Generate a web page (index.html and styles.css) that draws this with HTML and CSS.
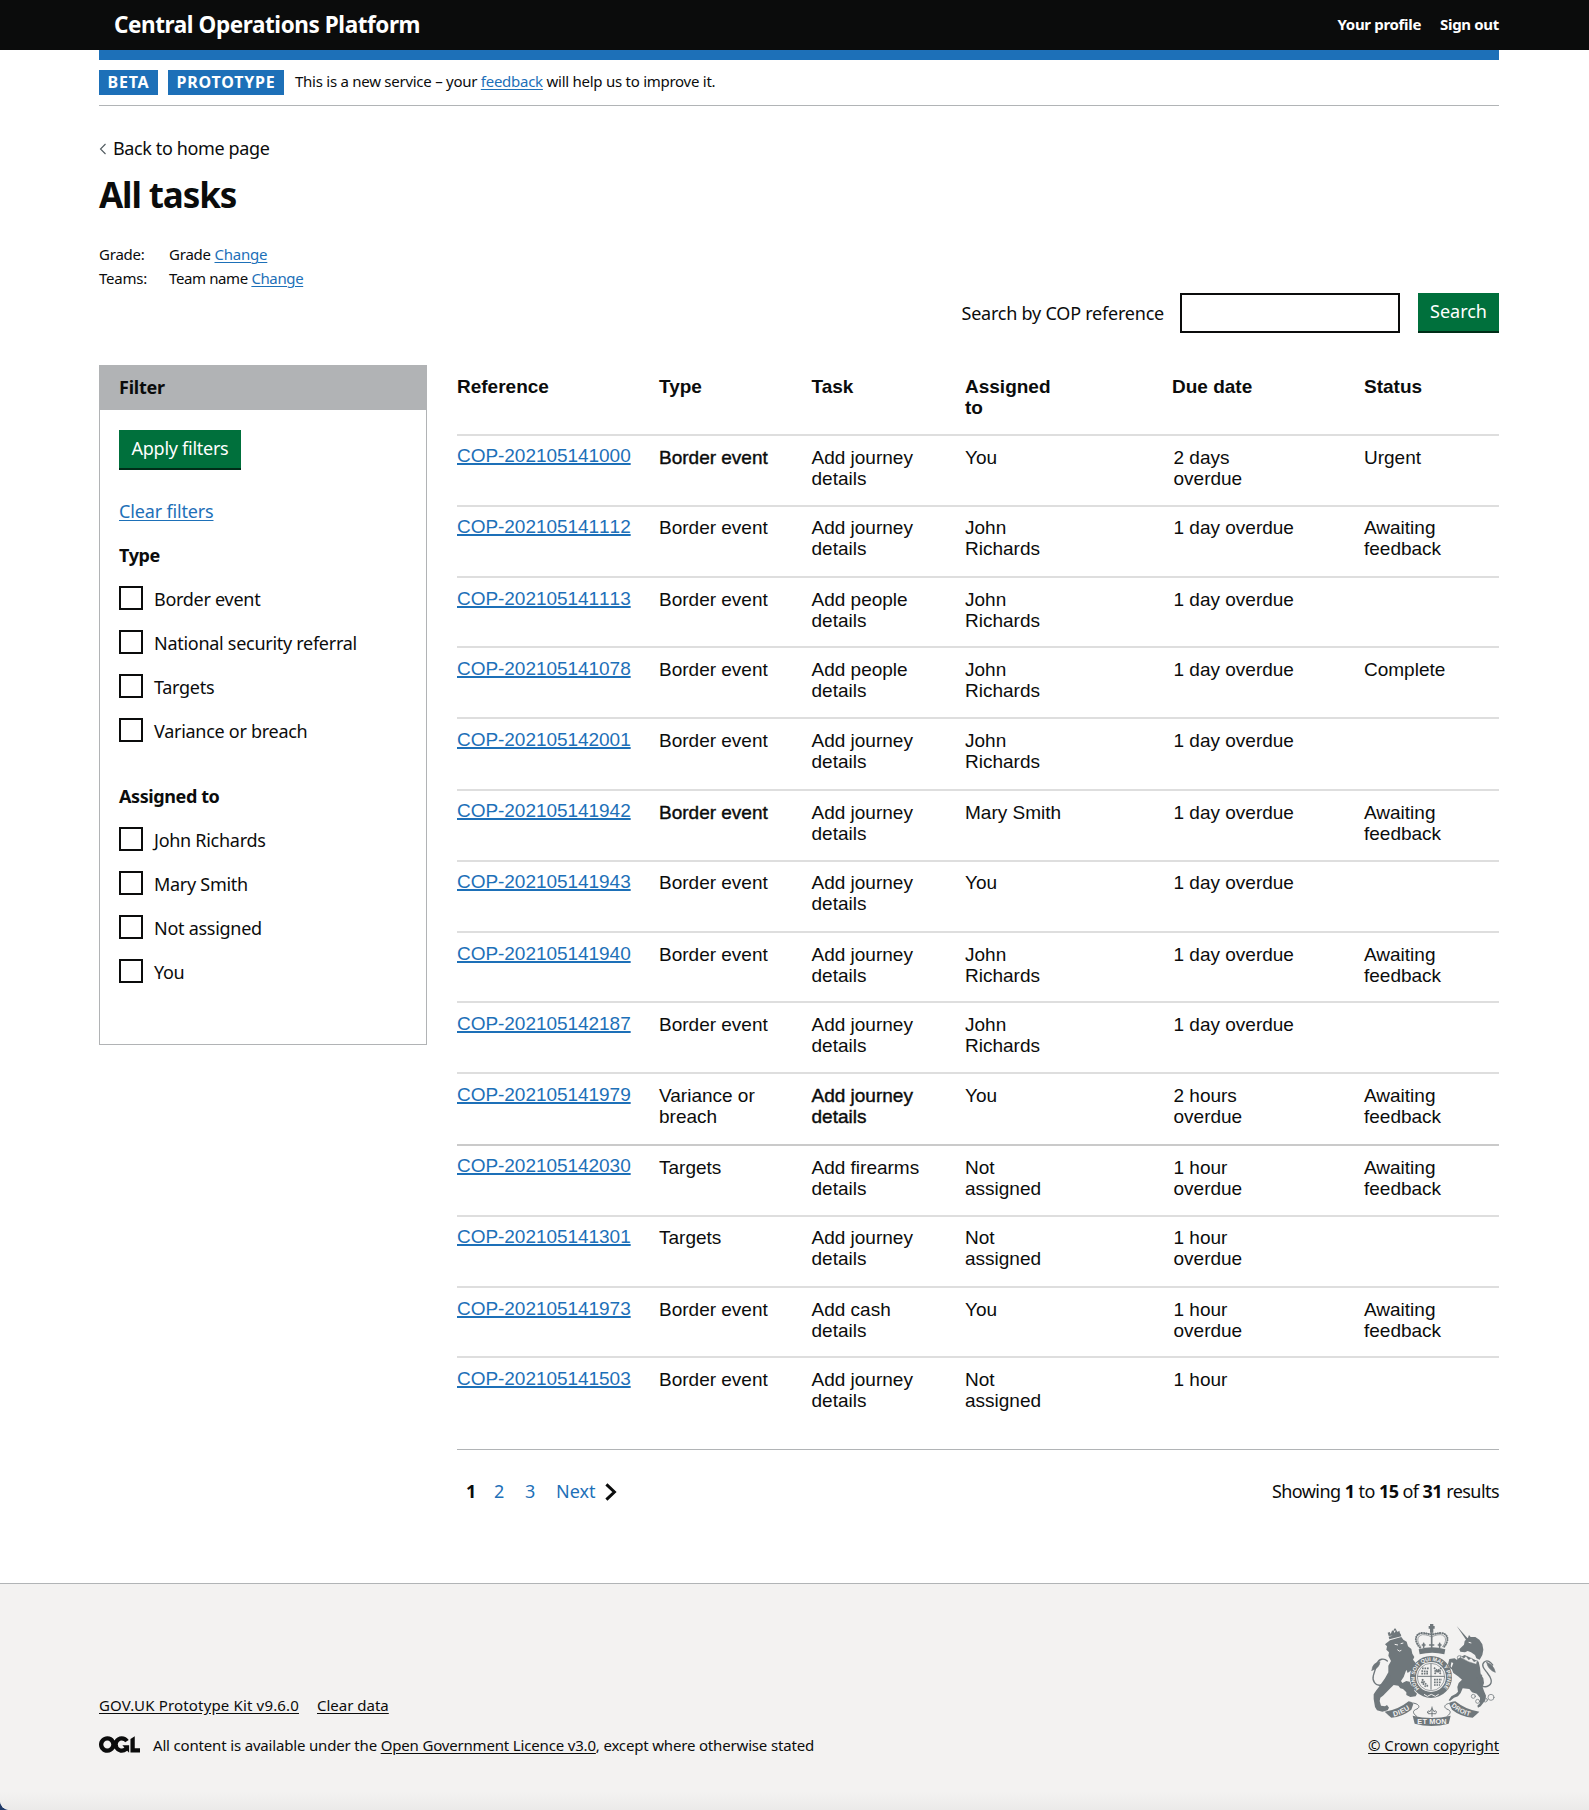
FILE: index.html
```html
<!DOCTYPE html>
<html lang="en">
<head>
<meta charset="utf-8">
<title>All tasks – Central Operations Platform</title>
<link rel="stylesheet" href="styles.css">
</head>
<body>
<header class="header">
  <div class="container header-inner">
    <a class="product" href="#">Central Operations Platform</a>
    <nav class="header-nav"><a class="nav-a" href="#">Your profile</a><a class="nav-b" href="#">Sign out</a></nav>
  </div>
</header>
<div class="container">
  <div class="blue-bar"></div>
  <div class="phase">
    <strong class="tag tag-beta"><span>BETA</span></strong>
    <strong class="tag tag-proto"><span>PROTOTYPE</span></strong>
    <p class="phase-text"><span>This is a new service – your <a class="link" href="#">feedback</a> will help us to improve it.</span></p>
  </div>
  <a class="back" href="#"><svg width="8" height="12" viewBox="0 0 8 12"><path d="M6.5 1 1.5 6l5 5" fill="none" stroke="#505a5f" stroke-width="1.1"/></svg><span>Back to home page</span></a>
  <h1 class="title"><span>All tasks</span></h1>
  <div class="meta">
    <div class="meta-row"><span class="meta-key">Grade:</span><span class="meta-val">Grade <a class="link" href="#">Change</a></span></div>
    <div class="meta-row"><span class="meta-key">Teams:</span><span class="meta-val meta-team">Team name <a class="link" href="#">Change</a></span></div>
  </div>
  <form class="search">
    <label class="search-label" for="q">Search by COP reference</label>
    <input class="search-input" id="q" type="text">
    <button class="btn btn-search" type="button"><span>Search</span></button>
  </form>
  <div class="columns">
    <aside class="filter">
      <h2 class="filter-head"><span>Filter</span></h2>
      <div class="filter-body">
        <button class="btn btn-apply" type="button"><span>Apply filters</span></button>
        <a class="link clear" href="#">Clear filters</a>
        <h3 class="group group-type"><span>Type</span></h3>
        <label class="check"><i class="box"></i><span>Border event</span></label>
        <label class="check"><i class="box"></i><span>National security referral</span></label>
        <label class="check"><i class="box"></i><span>Targets</span></label>
        <label class="check"><i class="box"></i><span>Variance or breach</span></label>
        <h3 class="group group-assigned"><span>Assigned to</span></h3>
        <label class="check"><i class="box"></i><span>John Richards</span></label>
        <label class="check"><i class="box"></i><span>Mary Smith</span></label>
        <label class="check"><i class="box"></i><span>Not assigned</span></label>
        <label class="check"><i class="box"></i><span>You</span></label>
      </div>
    </aside>
    <main class="results">
      <div class="thead"><b>Reference</b><b>Type</b><b>Task</b><b class="who">Assigned to</b><b class="due">Due date</b><b>Status</b></div>
      <div class="tbody">
        <div class="row"><a class="ref" href="#">COP-202105141000</a><span class="heavy">Border event</span><span>Add journey details</span><span class="who">You</span><span class="due">2 days overdue</span><span>Urgent</span></div>
        <div class="row"><a class="ref" href="#">COP-202105141112</a><span>Border event</span><span>Add journey details</span><span class="who">John Richards</span><span class="due">1 day overdue</span><span>Awaiting feedback</span></div>
        <div class="row"><a class="ref" href="#">COP-202105141113</a><span>Border event</span><span>Add people details</span><span class="who">John Richards</span><span class="due">1 day overdue</span><span></span></div>
        <div class="row"><a class="ref" href="#">COP-202105141078</a><span>Border event</span><span>Add people details</span><span class="who">John Richards</span><span class="due">1 day overdue</span><span>Complete</span></div>
        <div class="row"><a class="ref" href="#">COP-202105142001</a><span>Border event</span><span>Add journey details</span><span class="who">John Richards</span><span class="due">1 day overdue</span><span></span></div>
        <div class="row"><a class="ref" href="#">COP-202105141942</a><span class="heavy">Border event</span><span>Add journey details</span><span class="who">Mary Smith</span><span class="due">1 day overdue</span><span>Awaiting feedback</span></div>
        <div class="row"><a class="ref" href="#">COP-202105141943</a><span>Border event</span><span>Add journey details</span><span class="who">You</span><span class="due">1 day overdue</span><span></span></div>
        <div class="row"><a class="ref" href="#">COP-202105141940</a><span>Border event</span><span>Add journey details</span><span class="who">John Richards</span><span class="due">1 day overdue</span><span>Awaiting feedback</span></div>
        <div class="row"><a class="ref" href="#">COP-202105142187</a><span>Border event</span><span>Add journey details</span><span class="who">John Richards</span><span class="due">1 day overdue</span><span></span></div>
        <div class="row"><a class="ref" href="#">COP-202105141979</a><span>Variance or breach</span><span class="heavy">Add journey details</span><span class="who">You</span><span class="due">2 hours overdue</span><span>Awaiting feedback</span></div>
        <div class="row row-dark"><a class="ref" href="#">COP-202105142030</a><span>Targets</span><span>Add firearms details</span><span class="who">Not assigned</span><span class="due">1 hour overdue</span><span>Awaiting feedback</span></div>
        <div class="row"><a class="ref" href="#">COP-202105141301</a><span>Targets</span><span>Add journey details</span><span class="who">Not assigned</span><span class="due">1 hour overdue</span><span></span></div>
        <div class="row"><a class="ref" href="#">COP-202105141973</a><span>Border event</span><span>Add cash details</span><span class="who">You</span><span class="due">1 hour overdue</span><span>Awaiting feedback</span></div>
        <div class="row"><a class="ref" href="#">COP-202105141503</a><span>Border event</span><span>Add journey details</span><span class="who">Not assigned</span><span class="due">1 hour</span><span></span></div>
      </div>
      <div class="pager">
        <div class="pages"><b class="p1">1</b><a class="p2" href="#">2</a><a class="p3" href="#">3</a><a class="next" href="#">Next</a><svg class="chev" width="12" height="18" viewBox="0 0 12 18"><path d="M1.4 1.4 9.4 9l-8 7.6" fill="none" stroke="#0b0c0c" stroke-width="3"/></svg></div>
        <p class="showing"><span>Showing <b>1</b> to <b>15</b> of <b>31</b> results</span></p>
      </div>
    </main>
  </div>
</div>
<footer class="footer">
  <div class="container footer-inner">
    <div class="footer-left">
      <div class="footer-links"><a class="kit" href="#">GOV.UK Prototype Kit v9.6.0</a><a class="cleardata" href="#">Clear data</a></div>
      <div class="licence">
        <svg class="ogl" width="41" height="17" viewBox="0 0 483.2 195.7"><path fill="#0b0c0c" d="M421.5 142.8V.1l-50.7 32.3v161.1h112.4v-50.7zm-122.3-9.6A47.12 47.12 0 0 1 221 97.8c0-26 21.1-47.1 47.1-47.1 16.7 0 31.4 8.7 39.7 21.8l42.7-27.2A97.63 97.63 0 0 0 268.1 0c-36.5 0-68.3 20.1-85.1 49.7A98 98 0 0 0 97.8 0C43.9 0 0 43.9 0 97.8s43.9 97.8 97.8 97.8c36.5 0 68.3-20.1 85.1-49.7a97.76 97.76 0 0 0 149.6 25.4l19.4 22.2h3v-87.8h-80l24.3 27.5zM97.8 145c-26 0-47.1-21.1-47.1-47.1s21.1-47.1 47.1-47.1 47.1 21.1 47.1 47.1S123.8 145 97.8 145"/></svg>
        <span class="lic">All content is available under the <a href="#">Open Government Licence v3.0</a>, except where otherwise stated</span>
      </div>
    </div>
    <div class="footer-right">
      <svg class="crest" width="125" height="102" viewBox="33 27 375 306">
        <g fill="#6f777b">
          <!-- lion -->
          <path d="M90 76l34-10 6 8 10 6 4 14 10 8 3 14 6 10-4 8 10 12 4 14-14 2-16 12-4-10-8 22-8 12 4 6 12-6 10 2 4 10 10 10 0 8 8 8-4 8-16 2-12-6 0-8-10-10-8-2-6-8-14-2-10 10-22 22-8 6-2 10 4 14 12 2 6-4 6 8-4 8-16 4-16-4-6-10-4-24 0-14 8-12 6-8 10-14 10-14 10-18 0-20 8-14-8-16 2-10-8-8 2-10 -6-6z"/>
          <path d="M86 65l36-9 2 8-36 9zM86 63l-3-10 6-2 3 6 4-10 5-1 2 8 6-9 4 6 5-4 2 8 2 5z"/>
          <circle cx="105" cy="44" r="3.5"/>
          <!-- unicorn -->
          <path d="M290 33l34 38-5 5zM314 78l10-10 3-8 5 6 14 0 12 8 9 14 3 16-3 16-8 14-10-4-4-10-12-8-10-4-8 4-14-2-3-7 6-6 8-8z"/>
          <path d="M302 126l12-6 26 12 16 8 4 18 2 20 8 12 2 14-4 12 4 12 6 14-2 14-14 18-8 4-2-6 8-8 0-16-10-12-14-4-8-10-20-2-6 14-8 10-12 4-12 10-4-2 8-12 14-8 6-6-2-14 4-12 10-10-12-10-14-10-6-14 6-16-6-2-2 12 6 10-8-4-6-12 4-16 16-2 6 4z"/>
          <!-- crown -->
          <path d="M210 27h10v6h4v8h-4l0 12h-10V41h-4v-8h4zM176 103q40-12 80 0l-3 15q-36-10-74 0z"/>
        </g>
        <g fill="none" stroke="#6f777b" stroke-linecap="round">
          <!-- lion and unicorn tails -->
          <path d="M82 138c-10-10-26-6-30 6s-8 24-12 38 6 32 22 28 24-14 28-26" stroke-width="4"/>
          <path d="M36 166q0-22 24-26-2 20-24 26z" fill="#6f777b" stroke-width="2"/>
          <path d="M350 188c8 20 20 34 36 24s4-28-4-38-20-22-10-32 20 0 26 8" stroke-width="4"/>
          <path d="M380 142q20 6 26 30-22-8-26-30z" fill="#6f777b" stroke-width="2"/>
          <!-- crown arches -->
          <path d="M180 98c-20-22-14-42 6-44 12 0 20 4 29 4 9 0 17-4 29-4 20 2 26 22 6 44" stroke-width="6" stroke-dasharray="1 6"/>
          <path d="M183 96c-16-18-11-35 5-37 14 0 22 4 27 8 5-4 13-8 27-8 16 2 21 19 5 37" stroke-width="2"/>
          <path d="M215 54v40M191 97v-12m-4 5h8M239 97v-12m-4 5h8M215 97v-12m-6 5h12" stroke-width="5"/>
          <!-- garter and shield -->
          <circle cx="213" cy="186" r="54" stroke-width="18"/>
          <circle cx="213" cy="186" r="41" stroke-width="2"/>
          <path d="M213 147v76M174 184h78" stroke-width="3"/>
          <g stroke-width="5">
            <path d="M186 160h20M184 168l22 2M184 176h20M222 158l22 20M244 158l-22 20M223 168h20M186 193l18 22M184 200l14 16M188 192v16M222 194h24M222 202h22M222 210h18" stroke-dasharray="5 2.5" stroke-linecap="butt"/>
          </g>
          <!-- chain -->
          <g stroke-width="2.2"><circle cx="298" cy="128" r="6"/><circle cx="340" cy="244" r="6"/><circle cx="353" cy="259" r="6"/><circle cx="376" cy="255" r="6"/><circle cx="393" cy="247" r="9"/><circle cx="360" cy="182" r="5"/></g>
          <!-- fleur and ribbon folds -->
          <path d="M216 276v28m-13-12q0-8 7-2l6-10 6 10q7-6 7 2 0 7-8 4h-10q-8 3-8-4z" stroke-width="3"/>
          <path d="M158 264c20 2 26 14 8 20-12 6-2 16 4 20M273 264c-20 2-26 14-8 20 12 6 2 16-4 20" stroke-width="3"/>
        </g>
        <g fill="#6f777b">
          <path d="M74 290q38-4 72-31 10 0 14 8l-6 17q-28 22-60 24-10-8-20-18z"/>
          <path d="M358 290q-38-4-72-31-14 0-18 8l8 17q28 22 62 24 10-8 20-18z"/>
          <path d="M158 302q56 14 114 0l-6 24q-52 14-102 0z"/>
        </g>
        <path d="M302 122l10 8 6-7 8 11 8-5 8 11 10-4-3 12q-24-6-47-20z" fill="#f3f2f1" stroke="#6f777b" stroke-width="1.5"/>
        <path d="M104 88l10 2M122 86l8-2M112 104q6 8 12 2M192 238l10 6 12-6 12 6 10-6M326 82l8 2" fill="none" stroke="#f3f2f1" stroke-width="3"/>
        <path id="garter" d="M178 221A49 49 0 1 1 248 221" fill="none"/>
        <path id="dieu" d="M101 304q30-6 54-26" fill="none"/>
        <path id="droit" d="M273 273q26 24 60 31" fill="none"/>
        <g fill="#f3f2f1" font-family="Liberation Sans, sans-serif" font-weight="700">
          <text font-size="16"><textPath href="#garter" textLength="226">HONI SOIT QUI MAL Y PENSE</textPath></text>
          <text font-size="21"><textPath href="#dieu" textLength="54">DIEU</textPath></text>
          <text font-size="20"><textPath href="#droit" textLength="64">DROIT</textPath></text>
          <text x="172" y="328" font-size="22" textLength="88">ET MON</text>
        </g>
      </svg>
      <a class="copyright" href="#">© Crown copyright</a>
    </div>
  </div>
</footer>
</body>
</html>
```
FILE: styles.css
```css
* { box-sizing: border-box; }
html { background: #1f3a68; }
body {
  margin: 0;
  background: #fff;
  border-bottom-left-radius: 9px;
  color: #0b0c0c;
  font-family: "Noto Sans", "Open Sans", sans-serif;
  font-size: 19px;
  line-height: 25px;
}
h1, h2, h3, p { margin: 0; }
a { color: inherit; text-decoration: none; }
.container { width: 1400px; margin-left: 99px; }
.link { color: #1d70b8; text-decoration: underline; text-decoration-thickness: 1px; text-underline-offset: 2px; }

.header { height: 50px; background: #0b0c0c; color: #fff; }
.header-inner { display: flex; justify-content: space-between; align-items: center; height: 50px; padding: 0 0 2px 15px; }
.product { font-size: 22.5px; font-weight: 700; letter-spacing: -0.42px; }
.header-nav { display: flex; gap: 19px; font-size: 15px; font-weight: 700; letter-spacing: -0.32px; }
.blue-bar { height: 10px; background: #1d70b8; }

.phase { display: flex; align-items: center; height: 46px; border-bottom: 1px solid #b1b4b6; }
.tag { display: flex; align-items: center; justify-content: center; height: 25px; background: #1d70b8; color: #fff; font-size: 16px; letter-spacing: 0.8px; }
.tag-beta { width: 59px; }
.tag-proto { width: 116px; margin-left: 10px; }
.phase-text { margin-left: 11px; padding-bottom: 4px; font-size: 15px; line-height: 20px; letter-spacing: -0.26px; }

.back { display: flex; align-items: center; gap: 6px; width: max-content; margin-top: 30px; font-size: 18px; letter-spacing: -0.38px; }
.title { margin-top: 14px; font-size: 35px; line-height: 40px; letter-spacing: -1.1px; }
.meta { margin-top: 27px; font-size: 15px; line-height: 24px; letter-spacing: -0.22px; }
.meta-row { display: flex; }
.meta-key { width: 70px; }
.meta-team { letter-spacing: -0.38px; }

.search { display: flex; justify-content: flex-end; height: 40px; margin-top: 3px; }
.search-label { margin: 8px 16px 0 0; font-size: 18px; letter-spacing: -0.22px; }
.search-input { width: 220px; height: 40px; border: 2px solid #0b0c0c; margin-right: 18px; padding: 0; }
.btn { display: block; height: 40px; padding: 0; border: 0; background: #00703c; color: #fff; font: 18px/38px "Noto Sans", sans-serif; box-shadow: inset 0 -2px 0 #002d18; text-align: center; }
.btn span { display: block; height: 40px; line-height: 37px; }
.btn-search { width: 81px; }

.columns { display: flex; align-items: flex-start; gap: 30px; margin-top: 32px; }
.filter { width: 328px; height: 680px; border: 1px solid #b1b3b5; }
.filter-head { height: 44px; padding: 9px 0 0 19px; background: #b1b3b5; font-size: 18px; line-height: 25px; letter-spacing: -0.25px; }
.filter-body { padding: 20px 19px; font-size: 18px; letter-spacing: -0.28px; }
.btn-apply { width: 122px; letter-spacing: -0.26px; }
.clear { display: block; width: max-content; margin-top: 29px; letter-spacing: -0.16px; }
.group { font-size: 18px; line-height: 25px; letter-spacing: -0.4px; }
.group-type { margin: 19px 0 18px; }
.group-assigned { margin: 42px 0 18px; }
.check { display: flex; gap: 11px; height: 24px; margin-bottom: 20px; }
.check span { margin-top: 1px; }
.box { width: 24px; height: 24px; border: 2px solid #0b0c0c; }

.results { width: 1042px; font-family: "Liberation Sans", Arial, sans-serif; line-height: 21px; }
.thead, .row { display: grid; grid-template-columns: 202px 152.5px 153.5px 208.5px 190.5px 135px; }
.thead { height: 69px; padding-top: 11px; }
.thead .due { margin-left: -1.5px; }
.who { width: 100px; }
.due { width: 122px; }
.row { height: 71px; padding-top: 11px; border-top: 2px solid #dedede; }
.row > span:nth-child(2), .row > span:nth-child(3) { padding-right: 18px; }
.row:nth-child(5n+2) { padding-top: 10px; }
.row:nth-child(5n+3) { height: 70px; }
.row:nth-child(5n) { height: 72px; }
.row-dark { border-top-color: #cacaca; }
.row:last-child { height: 93px; }
.ref { margin-top: -1px; color: #1d70b8; font-kerning: none; text-decoration: underline; text-decoration-thickness: 2px; text-underline-offset: 1px; letter-spacing: -0.04px; }
.row:nth-child(5n+1) .ref { margin-top: -2px; }
.heavy { -webkit-text-stroke: 0.4px #0b0c0c; }

.pager { display: flex; justify-content: space-between; border-top: 1px solid #b1b4b6; height: 134px; padding-top: 29px; font-family: "Noto Sans", sans-serif; font-size: 18px; line-height: 25px; }
.pages { display: flex; padding-left: 9px; }
.pages a { color: #1d70b8; }
.p1 { width: 28px; }
.p2 { width: 31px; }
.p3 { width: 31px; }
.chev { margin: 4px 0 0 9px; }
.showing { letter-spacing: -0.56px; }

.footer { height: 227px; border-top: 1px solid #b1b4b6; border-bottom-left-radius: 9px; background: linear-gradient(#f3f2f1 208px, #ebeae9); font-size: 15px; line-height: 20px; }
.footer a { text-decoration: underline; text-underline-offset: 2px; }
.footer-inner { display: flex; justify-content: space-between; }
.footer-left { padding-top: 111px; }
.footer-links { display: flex; gap: 18px; }
.kit { letter-spacing: 0.16px; }
.licence { display: flex; gap: 13px; margin-top: 20px; letter-spacing: -0.17px; }
.ogl { margin-top: 1px; }
.footer-right { display: flex; flex-direction: column; align-items: flex-end; padding-top: 40px; }
.crest { margin: 0 3px 9px 0; }
.copyright { letter-spacing: -0.08px; }
```
